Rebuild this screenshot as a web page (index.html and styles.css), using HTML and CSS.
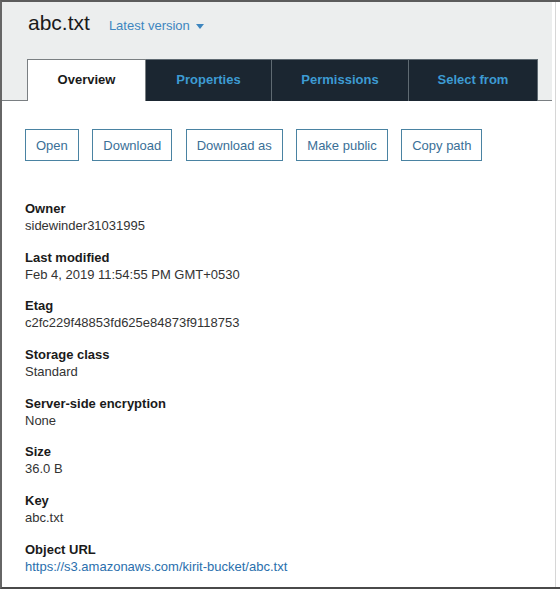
FILE: index.html
```html
<!DOCTYPE html>
<html>
<head>
<meta charset="utf-8">
<link rel="stylesheet" href="styles.css">
</head>
<body>
<div class="frame">
  <div class="panel">
    <header class="header">
      <div class="title-row">
        <h1 class="title">abc.txt</h1>
        <span class="version">Latest version <span class="caret"></span></span>
      </div>
      <nav class="tabs">
        <div class="tab active">Overview</div>
        <div class="tab t-props">Properties</div>
        <div class="tab t-perm">Permissions</div>
        <div class="tab t-sel">Select from</div>
      </nav>
    </header>
    <main class="content">
      <div class="actions">
        <button class="btn">Open</button>
        <button class="btn">Download</button>
        <button class="btn">Download as</button>
        <button class="btn">Make public</button>
        <button class="btn">Copy path</button>
      </div>
      <dl class="fields">
        <div class="field"><dt>Owner</dt><dd>sidewinder31031995</dd></div>
        <div class="field"><dt>Last modified</dt><dd>Feb 4, 2019 11:54:55 PM GMT+0530</dd></div>
        <div class="field"><dt>Etag</dt><dd>c2fc229f48853fd625e84873f9118753</dd></div>
        <div class="field"><dt>Storage class</dt><dd>Standard</dd></div>
        <div class="field"><dt>Server-side encryption</dt><dd>None</dd></div>
        <div class="field"><dt>Size</dt><dd>36.0 B</dd></div>
        <div class="field"><dt>Key</dt><dd>abc.txt</dd></div>
        <div class="field"><dt>Object URL</dt><dd><a class="link" href="#">https://s3.amazonaws.com/kirit-bucket/abc.txt</a></dd></div>
      </dl>
    </main>
  </div>
  <div class="gap"></div>
  <div class="edge"></div>
</div>
</body>
</html>
```

FILE: styles.css
```css
* { box-sizing: border-box; }
html, body { margin: 0; padding: 0; background: #fff; }
body { font-family: "Liberation Sans", Arial, sans-serif; }

.frame {
  width: 560px;
  height: 589px;
  display: flex;
  border-top: 2px solid #5c5c5c;
  border-left: 2px solid #666;
  border-bottom: 2px solid #4a4a4a;
  overflow: hidden;
}
.panel { width: 550px; flex: 0 0 550px; display: flex; flex-direction: column; }
.gap { width: 3px; flex: 0 0 3px; }
.edge { width: 1px; flex: 0 0 1px; background: #d6d6d6; }

.header {
  background: #eceeee;
  border-bottom: 1px solid #7a7f82;
}
.title-row {
  display: flex;
  align-items: baseline;
  padding-left: 26px;
  height: 57px;
  padding-top: 9px;
}
.title {
  margin: 0;
  font-size: 21px;
  font-weight: normal;
  color: #1a1a1a;
  line-height: 24px;
}
.version {
  margin-left: 19px;
  font-size: 13px;
  color: #3e86bf;
  display: inline-flex;
  align-items: center;
  gap: 6px;
}
.caret {
  width: 0; height: 0;
  border-left: 4px solid transparent;
  border-right: 4px solid transparent;
  border-top: 5px solid #3e86bf;
  margin-top: 2px;
}

.tabs {
  display: flex;
  padding-left: 25px;
  height: 42px;
  margin-bottom: -1px;
}
.tab {
  display: flex;
  align-items: center;
  justify-content: center;
  font-size: 13px;
  font-weight: bold;
  background: #1b2631;
  color: #3d9bd3;
  border-left: 1px solid #5f6a72;
  border-top: 1px solid #5f6a72;
  padding-bottom: 2px;
}
.tab.active {
  width: 119px;
  background: #fff;
  color: #1a1a1a;
  border: 1px solid #7a7f82;
  border-bottom: none;
}
.t-props { width: 125px; border-left: none; }
.t-perm { width: 137px; }
.t-sel { width: 130px; border-right: 1px solid #5f6a72; }

.content { padding: 28px 0 0 23px; }

.actions { display: flex; gap: 13.5px; }
.btn {
  height: 32px;
  padding: 0 10px;
  font-family: "Liberation Sans", Arial, sans-serif;
  font-size: 13px;
  color: #3a6f97;
  background: #fff;
  border: 1px solid #4a83a2;
  border-radius: 0;
}

.fields { margin: 39px 0 0 0; }
.field { margin-bottom: 14.7px; }
.field dt {
  font-size: 13px;
  font-weight: bold;
  color: #1a1a1a;
  line-height: 17px;
}
.field dd {
  margin: 0;
  font-size: 13px;
  color: #333;
  line-height: 17px;
}
.link { color: #2a6fad; text-decoration: none; }
```
